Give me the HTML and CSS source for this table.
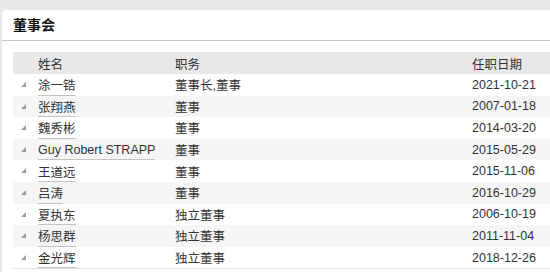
FILE: index.html
```html
<!DOCTYPE html>
<html lang="zh">
<head>
<meta charset="utf-8">
<link rel="stylesheet" href="styles.css">
</head>
<body>
<div class="panel">
  <div class="panel-title">董事会</div>
  <div class="board">
    <div class="row head">
      <div class="c-icon"></div>
      <div class="c-name"><span class="hd">姓名</span></div>
      <div class="c-pos">职务</div>
      <div class="c-date">任职日期</div>
    </div>
    <div class="row"><div class="c-icon"><span class="tri"></span></div><div class="c-name"><span class="nm">涂一锆</span></div><div class="c-pos">董事长,董事</div><div class="c-date">2021-10-21</div></div>
    <div class="row alt"><div class="c-icon"><span class="tri"></span></div><div class="c-name"><span class="nm">张翔燕</span></div><div class="c-pos">董事</div><div class="c-date">2007-01-18</div></div>
    <div class="row"><div class="c-icon"><span class="tri"></span></div><div class="c-name"><span class="nm">魏秀彬</span></div><div class="c-pos">董事</div><div class="c-date">2014-03-20</div></div>
    <div class="row alt"><div class="c-icon"><span class="tri"></span></div><div class="c-name"><span class="nm">Guy Robert STRAPP</span></div><div class="c-pos">董事</div><div class="c-date">2015-05-29</div></div>
    <div class="row"><div class="c-icon"><span class="tri"></span></div><div class="c-name"><span class="nm">王道远</span></div><div class="c-pos">董事</div><div class="c-date">2015-11-06</div></div>
    <div class="row alt"><div class="c-icon"><span class="tri"></span></div><div class="c-name"><span class="nm">吕涛</span></div><div class="c-pos">董事</div><div class="c-date">2016-10-29</div></div>
    <div class="row"><div class="c-icon"><span class="tri"></span></div><div class="c-name"><span class="nm">夏执东</span></div><div class="c-pos">独立董事</div><div class="c-date">2006-10-19</div></div>
    <div class="row alt"><div class="c-icon"><span class="tri"></span></div><div class="c-name"><span class="nm">杨思群</span></div><div class="c-pos">独立董事</div><div class="c-date">2011-11-04</div></div>
    <div class="row last"><div class="c-icon"><span class="tri"></span></div><div class="c-name"><span class="nm">金光辉</span></div><div class="c-pos">独立董事</div><div class="c-date">2018-12-26</div></div>
  </div>
</div>
</body>
</html>
```

FILE: styles.css
```css
html, body {
  margin: 0;
  padding: 0;
}
body {
  background: #e8e8e8;
  font-family: "Liberation Sans", "Noto Sans CJK SC", sans-serif;
  font-size: 12.5px;
  color: #333;
  padding: 10px 0 0 2px;
  overflow: hidden;
}
.panel {
  background: #fff;
  border-radius: 4px 0 0 0;
  height: 262px;
}
.panel-title {
  height: 30px;
  line-height: 31px;
  padding-left: 11px;
  font-size: 14px;
  font-weight: bold;
  color: #111;
  border-bottom: 1px solid #c8c8c8;
}
.board {
  margin: 11px 0 0 11px;
}
.row {
  display: grid;
  grid-template-columns: 25px 137px 297px 1fr;
  height: 21.6px;
  align-items: center;
}
.row.head {
  background: #e8e8e8;
  height: 22px;
}
.row.alt {
  background: #f5f5f5;
}
.row.last {
  border-bottom: 1px solid #e0e0e0;
}
.c-icon {
  position: relative;
  height: 100%;
}
.tri {
  position: absolute;
  left: 8px;
  top: 8px;
  width: 0;
  height: 0;
  border-style: solid;
  border-width: 0 0 5px 5px;
  border-color: transparent transparent #9a9a9a transparent;
}
.c-name {
  height: 100%;
  display: flex;
  align-items: stretch;
}
.hd {
  display: flex;
  align-items: center;
}
.nm {
  display: flex;
  align-items: center;
  border-bottom: 1px solid #c4c4c4;
  box-sizing: border-box;
  padding-top: 1px;
}
```
